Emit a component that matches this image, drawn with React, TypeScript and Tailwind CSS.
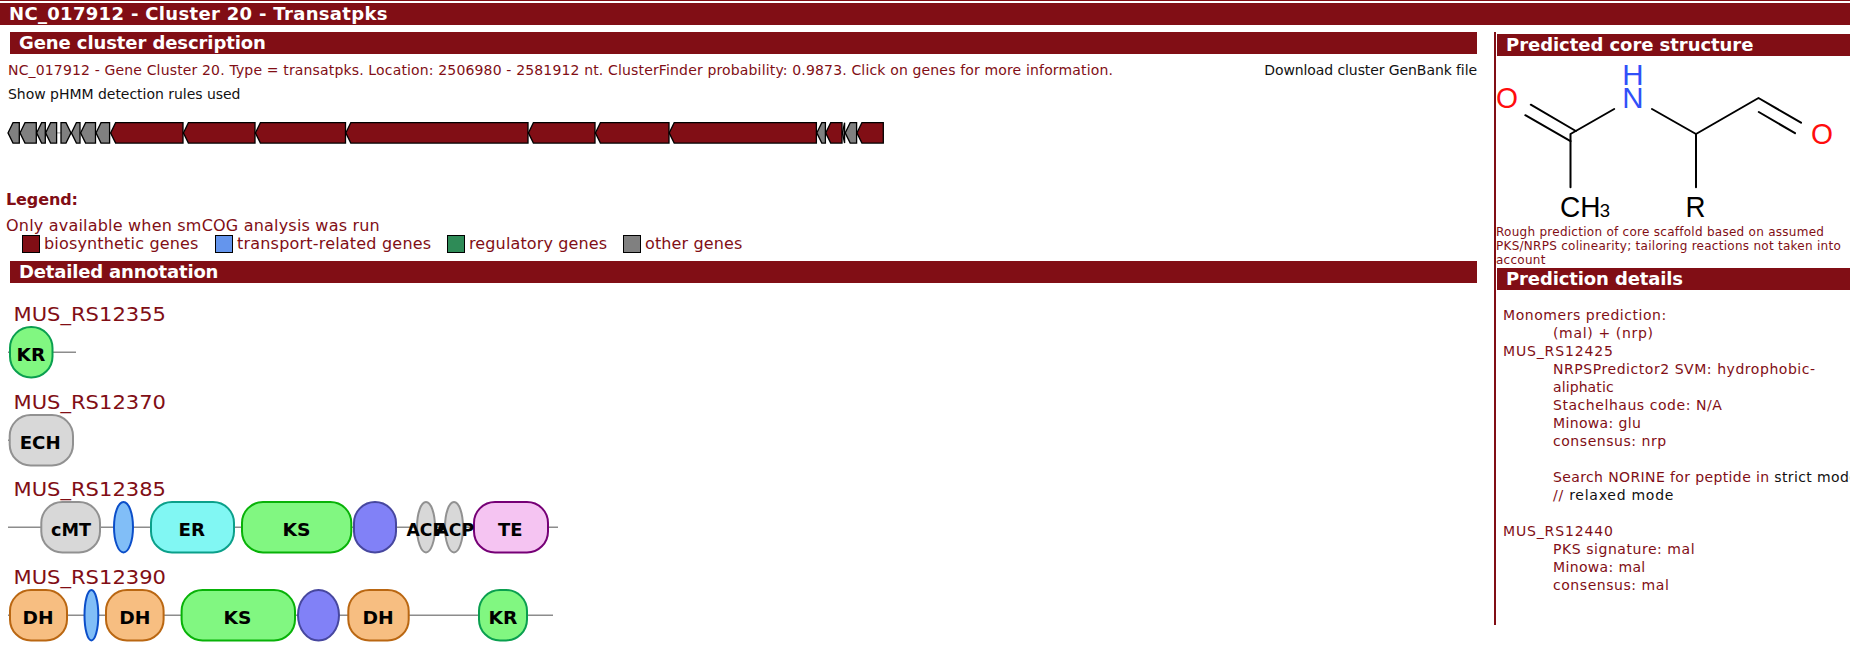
import React from "react";

const MAROON = "#810e15";

type Gene = { from: number; to: number; kind: "bio" | "other"; forward?: boolean };

const genes: Gene[] = [
  { from: 8, to: 19.3, kind: "other" },
  { from: 20, to: 36.3, kind: "other" },
  { from: 36.6, to: 45.3, kind: "other" },
  { from: 45.6, to: 56.6, kind: "other" },
  { from: 61, to: 71, kind: "other", forward: true },
  { from: 71.4, to: 80, kind: "other" },
  { from: 80.6, to: 95.5, kind: "other" },
  { from: 96, to: 109.6, kind: "other" },
  { from: 110.6, to: 183, kind: "bio" },
  { from: 183.4, to: 255, kind: "bio" },
  { from: 255.4, to: 345.5, kind: "bio" },
  { from: 345.8, to: 528, kind: "bio" },
  { from: 528.4, to: 595, kind: "bio" },
  { from: 595.4, to: 669, kind: "bio" },
  { from: 669.2, to: 816.4, kind: "bio" },
  { from: 816.8, to: 825.4, kind: "other" },
  { from: 825.7, to: 842, kind: "bio" },
  { from: 842.4, to: 844.6, kind: "other" },
  { from: 845.2, to: 856.6, kind: "other" },
  { from: 856.9, to: 883.3, kind: "bio" },
];

function genePoints({ from, to, forward }: Gene) {
  const head = Math.min(5, to - from);
  return forward
    ? `${from},1.7 ${to - head},1.7 ${to},11.9 ${to - head},22.1 ${from},22.1`
    : `${to},1.7 ${from + head},1.7 ${from},11.9 ${from + head},22.1 ${to},22.1`;
}

const palette = {
  kr: ["#81f781", "#0a9f4f"],
  ks: ["#81f781", "#08b208"],
  gray: ["#d8d8d8", "#919191"],
  blue: ["#81bef7", "#0b4ec9"],
  er: ["#81f7f3", "#0ba08a"],
  at: ["#8181f7", "#47479f"],
  te: ["#f5c4f2", "#760076"],
  dh: ["#f7be81", "#ba6712"],
} as const;

type Domain = {
  from: number;
  to: number;
  color: keyof typeof palette;
  label?: string;
  textFrom?: number;
  textTo?: number;
};

const tracks: { name: string; end: number; domains: Domain[] }[] = [
  {
    name: "MUS_RS12355",
    end: 76,
    domains: [{ from: 9, to: 53.5, color: "kr", label: "KR", textFrom: 16.5, textTo: 45.2 }],
  },
  {
    name: "MUS_RS12370",
    end: 74,
    domains: [{ from: 8.7, to: 74, color: "gray", label: "ECH", textFrom: 19.7, textTo: 60.7 }],
  },
  {
    name: "MUS_RS12385",
    end: 558,
    domains: [
      { from: 40.3, to: 101, color: "gray", label: "cMT", textFrom: 51, textTo: 91 },
      { from: 113, to: 134, color: "blue" },
      { from: 150, to: 235, color: "er", label: "ER", textFrom: 178.5, textTo: 205 },
      { from: 241, to: 352.3, color: "ks", label: "KS", textFrom: 282.5, textTo: 310.5 },
      { from: 353, to: 397, color: "at" },
      { from: 416, to: 436, color: "gray", label: "ACP", textFrom: 406.5, textTo: 445 },
      { from: 444, to: 464, color: "gray", label: "ACP", textFrom: 435.5, textTo: 474 },
      { from: 473, to: 549, color: "te", label: "TE", textFrom: 498, textTo: 522.5 },
    ],
  },
  {
    name: "MUS_RS12390",
    end: 553,
    domains: [
      { from: 9, to: 68, color: "dh", label: "DH", textFrom: 22.5, textTo: 53.5 },
      { from: 83.5, to: 99.3, color: "blue" },
      { from: 105, to: 164.6, color: "dh", label: "DH", textFrom: 119.2, textTo: 150.4 },
      { from: 180.6, to: 296, color: "ks", label: "KS", textFrom: 223.5, textTo: 251.3 },
      { from: 297, to: 340, color: "at" },
      { from: 347.3, to: 409.7, color: "dh", label: "DH", textFrom: 362.5, textTo: 393.7 },
      { from: 478, to: 528, color: "kr", label: "KR", textFrom: 488.5, textTo: 517.3 },
    ],
  },
];

function Track({ name, end, domains }: (typeof tracks)[number]) {
  return (
    <svg width="600" height="87.5" viewBox="0 0 600 87.5" className="block shrink-0">
      <text x="13.5" y="28.5" fontSize="20" fill={MAROON} textLength="152.5" lengthAdjust="spacingAndGlyphs">
        {name}
      </text>
      <line x1="8" x2={end} y1="60.2" y2="60.2" stroke="#8c8c8c" strokeWidth="1.4" />
      {domains.map((d) => {
        const width = d.to - d.from - 2;
        return (
          <rect
            key={d.from}
            x={d.from + 1}
            y="35"
            width={width}
            height="50.4"
            rx={Math.min(21, width / 2)}
            ry={width < 42 ? 25.2 : 21}
            fill={palette[d.color][0]}
            stroke={palette[d.color][1]}
            strokeWidth="2"
          />
        );
      })}
      {domains.map((d) =>
        d.label ? (
          <text
            key={d.from}
            x={d.textFrom}
            y="69.2"
            fontSize="17"
            fontWeight="bold"
            textLength={(d.textTo ?? 0) - (d.textFrom ?? 0)}
            lengthAdjust="spacingAndGlyphs"
          >
            {d.label}
          </text>
        ) : null,
      )}
    </svg>
  );
}

function Molecule() {
  return (
    <svg
      width="353"
      height="169"
      viewBox="7 31 353 169"
      className="block shrink-0 font-['Liberation_Sans',sans-serif]"
      fontSize="29.5"
    >
      <g stroke="#000" strokeWidth="2" fill="none" strokeLinecap="round" strokeLinejoin="round">
        <path d="M40.8 79.7 85.8 106M35.3 90.2 80.5 116.2" />
        <path d="M124.2 84 80.5 109V162.3" />
        <path d="M162 84 206 109V162.3M206 109 268.5 73 311 97.7M268.8 87 305 108.2" />
      </g>
      <g textAnchor="middle">
        <g fill="#ff0d0d">
          <text x="17" y="83.3" textLength="22" lengthAdjust="spacingAndGlyphs">
            O
          </text>
          <text x="332" y="119.3" textLength="22" lengthAdjust="spacingAndGlyphs">
            O
          </text>
        </g>
        <g fill="#3050f8">
          <text x="142.8" y="60">
            H
          </text>
          <text x="142.8" y="83.3">
            N
          </text>
        </g>
        <text x="205.5" y="191.5" textLength="20" lengthAdjust="spacingAndGlyphs">
          R
        </text>
      </g>
      <text x="70" y="191.5" textLength="40.5" lengthAdjust="spacingAndGlyphs">
        CH
      </text>
      <text x="109.8" y="191.5" fontSize="18.5">
        3
      </text>
    </svg>
  );
}

function SectionHeading({ children, className }: { children: React.ReactNode; className: string }) {
  return (
    <h3
      className={`h-[22px] shrink-0 bg-[#810e15] text-[18px] leading-[22px] font-bold whitespace-nowrap text-white ${className}`}
    >
      {children}
    </h3>
  );
}

function LegendItem({ swatch, text, children }: { swatch: string; text: string; children: string }) {
  return (
    <li className="flex items-center">
      <span className={`mr-1 h-[18px] w-[18px] border border-black ${swatch}`} />
      <span className={`leading-[18px] whitespace-nowrap ${text}`}>{children}</span>
    </li>
  );
}

function Line({
  children,
  indent,
  tracking = "tracking-[0.55px]",
}: {
  children?: React.ReactNode;
  indent?: boolean;
  tracking?: string;
}) {
  return (
    <p className={`h-[18px] leading-[18px] whitespace-nowrap ${tracking} ${indent ? "pl-[50px]" : ""}`}>{children}</p>
  );
}

export default function App() {
  return (
    <div className="flex h-[647px] w-[1850px] flex-col overflow-hidden bg-white font-['DejaVu_Sans',sans-serif] text-[#810e15]">
      <div className="h-px shrink-0 bg-[#810e15]" />
      <h2 className="mt-[2px] h-[22px] shrink-0 bg-[#810e15] pl-[9px] text-[18px] leading-[22px] font-bold tracking-[0.32px] text-white">
        NC_017912 - Cluster 20 - Transatpks
      </h2>
      <div className="mt-[7px] flex flex-1">
        <main className="flex w-[1494px] shrink-0 flex-col">
          <SectionHeading className="ml-[10px] w-[1467px] pl-[9px] tracking-[-0.09px]">
            Gene cluster description
          </SectionHeading>
          <div className="mt-[7px] flex h-[18px] w-[1477px] shrink-0 justify-between pl-2 text-[14px] leading-[18px] whitespace-nowrap">
            <p className="tracking-[0.155px]">
              NC_017912 - Gene Cluster 20. Type = transatpks. Location: 2506980 - 2581912 nt. ClusterFinder
              probability: 0.9873. Click on genes for more information.
            </p>
            <a className="tracking-[-0.09px] text-[#111]">Download cluster GenBank file</a>
          </div>
          <a className="mt-[6px] h-[18px] shrink-0 pl-2 text-[14px] leading-[18px] tracking-[-0.03px] text-[#111]">
            Show pHMM detection rules used
          </a>
          <svg width="900" height="23" viewBox="0 0 900 23" className="mt-[18px] block shrink-0">
            <line x1="8" x2="883" y1="11.9" y2="11.9" stroke="#999" />
            {genes.map((g) => (
              <polygon
                key={g.from}
                points={genePoints(g)}
                fill={g.kind === "bio" ? MAROON : "#808080"}
                stroke="#000"
                strokeWidth="1.3"
              />
            ))}
          </svg>
          <h4 className="mt-[46px] h-[20px] shrink-0 pl-[6px] text-[16px] leading-[20px] font-bold tracking-[-0.1px]">
            Legend:
          </h4>
          <p className="mt-[6px] h-[20px] shrink-0 pl-[6px] text-[16px] leading-[20px] tracking-[0.2px]">
            Only available when smCOG analysis was run
          </p>
          <ul className="-mt-px flex h-[18px] shrink-0 pl-[22px] text-[16px]">
            <LegendItem swatch="bg-[#810e15]" text="w-[171px] tracking-[0.17px]">
              biosynthetic genes
            </LegendItem>
            <LegendItem swatch="bg-[#6495ed]" text="w-[210px] tracking-[0.2px]">
              transport-related genes
            </LegendItem>
            <LegendItem swatch="bg-[#2e8b57]" text="w-[154px] tracking-[0.13px]">
              regulatory genes
            </LegendItem>
            <LegendItem swatch="bg-[#808080]" text="tracking-[0.13px]">
              other genes
            </LegendItem>
          </ul>
          <SectionHeading className="mt-[8px] ml-[10px] w-[1467px] pl-[9px] tracking-[-0.17px]">
            Detailed annotation
          </SectionHeading>
          <div className="mt-[9px] flex flex-col">
            {tracks.map((t) => (
              <Track key={t.name} {...t} />
            ))}
          </div>
        </main>
        <aside className="flex h-[593px] w-[356px] shrink-0 flex-col overflow-hidden border-l-2 border-[#810e15] pt-[2px]">
          <SectionHeading className="ml-px pl-[9px] tracking-[-0.05px]">Predicted core structure</SectionHeading>
          <div className="pl-px">
            <Molecule />
          </div>
          <p className="h-[43px] shrink-0 text-[12px] leading-[14px] tracking-[0.27px] whitespace-nowrap">
            Rough prediction of core scaffold based on assumed
            <br />
            PKS/NRPS colinearity; tailoring reactions not taken into
            <br />
            account
          </p>
          <SectionHeading className="ml-px pl-[9px] tracking-[-0.12px]">Prediction details</SectionHeading>
          <div className="mt-[16px] pl-[7px] text-[14px]">
            <Line>Monomers prediction:</Line>
            <Line indent tracking="tracking-[0.65px]">
              (mal) + (nrp)
            </Line>
            <Line tracking="tracking-[0.85px]">MUS_RS12425</Line>
            <Line indent>NRPSPredictor2 SVM: hydrophobic-</Line>
            <Line indent tracking="tracking-[0.1px]">
              aliphatic
            </Line>
            <Line indent>Stachelhaus code: N/A</Line>
            <Line indent tracking="tracking-[0.35px]">
              Minowa: glu
            </Line>
            <Line indent>consensus: nrp</Line>
            <Line />
            <Line indent tracking="tracking-[0.38px]">
              Search NORINE for peptide in <a className="text-[#111]">strict mode</a>
            </Line>
            <Line indent tracking="tracking-[0.75px]">
              // <a className="text-[#111]">relaxed mode</a>
            </Line>
            <Line />
            <Line tracking="tracking-[0.85px]">MUS_RS12440</Line>
            <Line indent>PKS signature: mal</Line>
            <Line indent tracking="tracking-[0.35px]">
              Minowa: mal
            </Line>
            <Line indent>consensus: mal</Line>
          </div>
        </aside>
      </div>
    </div>
  );
}
